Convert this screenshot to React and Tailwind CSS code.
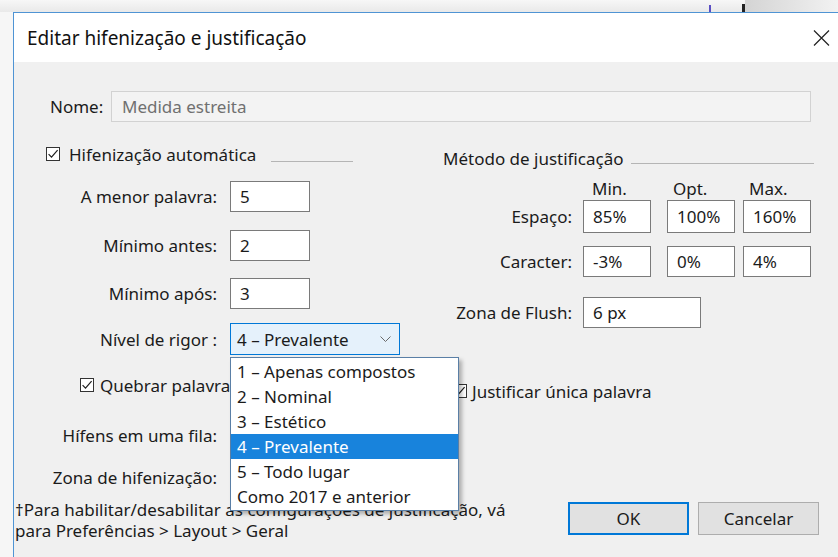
import { useState } from 'react'

const options = [
  '1 – Apenas compostos',
  '2 – Nominal',
  '3 – Estético',
  '4 – Prevalente',
  '5 – Todo lugar',
  'Como 2017 e anterior',
]

function Check() {
  return (
    <span className="w-[14px] h-[14px] border border-[#333] bg-white flex items-center justify-center shrink-0">
      <svg width="12" height="12" viewBox="0 0 12 12" fill="none">
        <path d="M1.6 6.2l2.9 3L10.6 2.2" stroke="#1e1e1e" strokeWidth="1.2" />
      </svg>
    </span>
  )
}

function Field({ w, value }) {
  return (
    <div className={`h-full ${w} border border-[#7a7a7a] bg-white flex items-center pl-[9px] text-[#1b1b1b]`}>
      {value}
    </div>
  )
}

function LeftRow({ label, children, className = '' }) {
  return (
    <div className={`flex items-center ${className}`}>
      <div className="w-[173px] text-right pr-[1px]">{label}</div>
      <div className="ml-[12px] h-full">{children}</div>
    </div>
  )
}

function RightRow({ label, children, className = '' }) {
  return (
    <div className={`flex items-center ${className}`}>
      <div className="w-[129px] text-right">{label}</div>
      <div className="ml-[11px] h-full flex">{children}</div>
    </div>
  )
}

export default function App() {
  const [level] = useState(3)

  return (
    <div className="w-[838px] h-[557px] overflow-hidden flex flex-col bg-[#f4f4f4] font-['Noto_Sans',sans-serif] text-[17px] leading-[21px] text-[#1b1b1b]">
      {/* window behind the dialog */}
      <div className="h-[12px] flex shrink-0 bg-gradient-to-b from-[#f7f7f7] to-[#e9e9e9]">
        <div className="w-[709px]" />
        <div className="w-[2px] mt-[5px] bg-[#5b4fc4]" />
        <div className="w-[31px]" />
        <div className="w-[3px] mt-[4px] bg-[#222]" />
        <div className="flex-1 bg-gradient-to-r from-[#d4d4d4] to-[#f2f2f2]" />
      </div>

      <div className="flex flex-1">
        <div className="w-[13px] bg-[#f6f6f6]" />
        <div className="flex-1 flex flex-col border-t border-l border-[#4f94d4]">
          {/* title bar */}
          <div className="h-[49px] bg-white flex items-center justify-between pl-[13px] pr-[8px]">
            <div className="text-[19px] leading-[24px] text-[#111]">Editar hifenização e justificação</div>
            <svg width="17" height="16" viewBox="0 0 17 16" fill="none">
              <path d="M1 0.5l15 15M16 0.5l-15 15" stroke="#222" strokeWidth="1.2" />
            </svg>
          </div>

          {/* body */}
          <div className="flex-1 bg-[#f0f0f0] flex flex-col">
            <div className="mt-[29px] h-[31px] flex items-center pl-[36px] pr-[27px]">
              <div className="w-[61px]">Nome:</div>
              <div className="flex-1 h-full border border-[#d2d2d2] bg-[#f3f3f3] flex items-center pl-[10px] text-[#707070]">
                Medida estreita
              </div>
            </div>

            <div className="flex mt-[22px] pl-[31px]">
              {/* hyphenation */}
              <div className="w-[398px] flex flex-col">
                <div className="h-[20px] flex items-center">
                  <span className="ml-[1px]"><Check /></span>
                  <span className="ml-[9px]">Hifenização automática</span>
                  <span className="ml-[15px] mt-[15px] w-[82px] h-px bg-[#b5b5b5]" />
                </div>
                <LeftRow label="A menor palavra:" className="mt-[17px] h-[31px]">
                  <Field w="w-[80px]" value="5" />
                </LeftRow>
                <LeftRow label="Mínimo antes:" className="mt-[18px] h-[31px]">
                  <Field w="w-[80px]" value="2" />
                </LeftRow>
                <LeftRow label="Mínimo após:" className="mt-[17px] h-[31px]">
                  <Field w="w-[80px]" value="3" />
                </LeftRow>
                <LeftRow label="Nível de rigor :" className="mt-[14px] h-[32px]">
                  <div className="relative h-full">
                    <div className="h-full w-[170px] border border-[#0078d7] bg-[#e5f1fb] flex items-center justify-between pl-[6px] pr-[8px]">
                      <span>{options[level]}</span>
                      <svg width="11" height="6" viewBox="0 0 11 6" fill="none">
                        <path d="M0.5 0.5l5 5 5-5" stroke="#6a6a6a" strokeWidth="1" />
                      </svg>
                    </div>
                    <div className="absolute z-10 left-0 top-[34px] w-[229px] border border-[#5a7fa6] bg-white py-px shadow-[3px_3px_4px_rgba(0,0,0,0.28)]">
                      {options.map((o, i) => (
                        <div
                          key={o}
                          className={`h-[25px] flex items-center pl-[6px] ${i === level ? 'bg-[#1883dc] text-white' : ''}`}
                        >
                          {o}
                        </div>
                      ))}
                    </div>
                  </div>
                </LeftRow>
                <div className="mt-[20px] h-[20px] flex items-center pl-[35px]">
                  <Check />
                  <span className="ml-[6px] whitespace-nowrap">Quebrar palavra</span>
                </div>
                <LeftRow label="Hífens em uma fila:" className="mt-[25px] h-[31px]">
                  <Field w="w-[80px]" value="" />
                </LeftRow>
                <LeftRow label="Zona de hifenização:" className="mt-[11px] h-[31px]">
                  <Field w="w-[80px]" value="" />
                </LeftRow>
              </div>

              {/* justification */}
              <div className="flex-1 flex flex-col">
                <div className="mt-[4px] h-[20px] flex items-center">
                  <span>Método de justificação</span>
                  <span className="ml-[7px] mt-[11px] w-[183px] h-px bg-[#b5b5b5]" />
                </div>
                <div className="mt-[10px] h-[18px] flex pl-[149px]">
                  <span className="w-[81px]">Min.</span>
                  <span className="w-[76px]">Opt.</span>
                  <span>Max.</span>
                </div>
                <RightRow label="Espaço:" className="mt-[4px] h-[33px]">
                  <Field w="w-[68px]" value="85%" />
                  <div className="w-[16px]" />
                  <Field w="w-[68px]" value="100%" />
                  <div className="w-[8px]" />
                  <Field w="w-[68px]" value="160%" />
                </RightRow>
                <RightRow label="Caracter:" className="mt-[13px] h-[31px]">
                  <Field w="w-[68px]" value="-3%" />
                  <div className="w-[16px]" />
                  <Field w="w-[68px]" value="0%" />
                  <div className="w-[8px]" />
                  <Field w="w-[68px]" value="4%" />
                </RightRow>
                <RightRow label="Zona de Flush:" className="mt-[20px] h-[31px]">
                  <Field w="w-[118px]" value="6 px" />
                </RightRow>
                <div className="mt-[53px] h-[20px] flex items-center pl-[10px]">
                  <Check />
                  <span className="ml-[5px]">Justificar única palavra</span>
                </div>
              </div>
            </div>

            {/* footnote and buttons */}
            <div className="mt-[6px] flex justify-between pl-[1px] pr-[19px]">
              <div className="leading-[21px]">
                <div>†Para habilitar/desabilitar as configurações de justificação, vá</div>
                <div>para Preferências &gt; Layout &gt; Geral</div>
              </div>
              <div className="mt-[3px] flex gap-[9px]">
                <button className="w-[121px] h-[33px] border-2 border-[#0078d7] bg-[#e1e1e1] text-[#1b1b1b]">OK</button>
                <button className="w-[121px] h-[33px] border border-[#adadad] bg-[#e1e1e1] text-[#1b1b1b]">Cancelar</button>
              </div>
            </div>
          </div>
        </div>
      </div>
    </div>
  )
}
